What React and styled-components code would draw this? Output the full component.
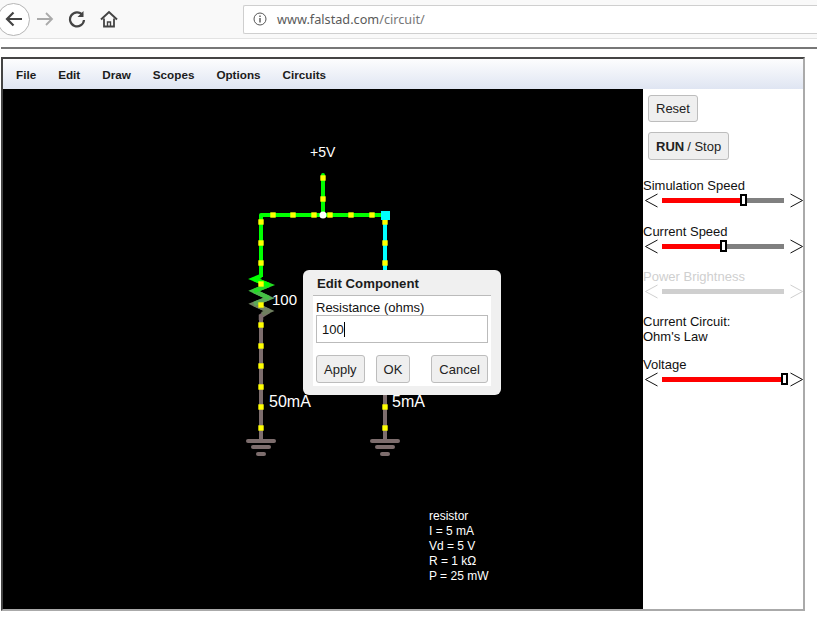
import React from "react";
import styled, { createGlobalStyle } from "styled-components";

const GlobalStyle = createGlobalStyle`
  html, body {
    margin: 0;
    padding: 0;
    background: #fff;
    font-family: "Liberation Sans", Arial, sans-serif;
  }
`;

const Page = styled.div`
  width: 817px;
  height: 629px;
  overflow: hidden;
  background: #fff;
`;

const BrowserBar = styled.div`
  height: 38px;
  display: flex;
  align-items: center;
  background: #f9f9f9;
  border-bottom: 1px solid #e3e3e3;
`;

const BackButton = styled.div`
  width: 31px;
  height: 31px;
  margin-left: -3px;
  border: 1px solid #b5b5b5;
  border-radius: 50%;
  background: #fff;
  display: flex;
  align-items: center;
  justify-content: center;
  flex: none;
`;

const NavIcon = styled.div`
  width: 20px;
  height: 20px;
  margin-left: ${(p) => p.$gap}px;
  display: flex;
  align-items: center;
  justify-content: center;
  flex: none;
`;

const UrlBox = styled.div`
  width: 600px;
  height: 27px;
  margin-left: 124px;
  display: flex;
  align-items: center;
  background: #fff;
  border: 1px solid #cfcfcf;
  border-right: none;
  border-radius: 2px 0 0 2px;
  flex: none;
  font-family: "Noto Sans", sans-serif;
  font-size: 12.7px;
  color: #777;
`;

const InfoIcon = styled.div`
  width: 14px;
  height: 14px;
  margin-left: 9px;
  margin-right: 10px;
  display: flex;
`;

const Host = styled.span`
  color: #5a5a5a;
`;

const Rule = styled.div`
  height: 2px;
  margin: 8px 0 0 1px;
  background: #777;
`;

const AppFrame = styled.div`
  width: 804px;
  height: 554px;
  margin: 8px 0 0 1px;
  box-sizing: border-box;
  border: 2px solid #aaa;
  border-top-color: #444;
  border-left-color: #444;
  display: flex;
  flex-direction: column;
`;

const MenuBar = styled.div`
  height: 30px;
  flex: none;
  display: flex;
  align-items: center;
  padding-left: 13px;
  gap: 22px;
  background: linear-gradient(#fdfdfe, #dfe5f2);
  font-size: 11.7px;
  font-weight: bold;
  color: #1c1c1c;
`;

const Body = styled.div`
  flex: 1;
  display: flex;
  min-height: 0;
`;

const Canvas = styled.div`
  position: relative;
  width: 640px;
  flex: none;
  background: #000;
`;

const Diagram = styled.svg`
  display: block;
  position: absolute;
  left: 0;
  top: 0;
`;

const InfoText = styled.div`
  position: absolute;
  left: 426px;
  top: 420px;
  color: #fff;
  font-size: 12px;
  line-height: 15px;
`;

const Dialog = styled.div`
  position: absolute;
  left: 300px;
  top: 181px;
  width: 198px;
  height: 125px;
  box-sizing: border-box;
  padding: 6px 10px 9px 10px;
  background: #f0f0f0;
  border-radius: 6px;
  display: flex;
  flex-direction: column;
`;

const DialogTitle = styled.div`
  height: 19px;
  flex: none;
  padding-left: 4px;
  font-size: 13.2px;
  font-weight: bold;
  line-height: 15px;
  color: #1c1c1c;
  border-bottom: 1px solid #bbb;
`;

const DialogBody = styled.div`
  flex: 1;
  background: #fff;
  padding: 5px 3px 0 3px;
  font-size: 13px;
  color: #111;
`;

const FieldLabel = styled.div`
  line-height: 14px;
`;

const FieldInput = styled.div`
  height: 28px;
  box-sizing: border-box;
  border: 1px solid #bbb;
  padding-left: 5px;
  display: flex;
  align-items: center;
`;

const Caret = styled.span`
  display: inline-block;
  width: 1px;
  height: 15px;
  background: #000;
`;

const ButtonRow = styled.div`
  display: flex;
  margin-top: 12px;
`;

const Button = styled.div`
  height: ${(p) => p.$h || 28}px;
  box-sizing: border-box;
  padding: 0 7px;
  margin-left: ${(p) => p.$left || 0}px;
  display: inline-flex;
  align-items: center;
  background: #efefef;
  border: 1px solid #bdbdbd;
  border-radius: 3px;
  font-size: 13px;
  color: #222;
`;

const Side = styled.div`
  flex: 1;
  background: #fff;
  padding: 6px 0 0 0;
  font-size: 13px;
  color: #111;
`;

const SideButtons = styled.div`
  padding-left: 5px;
  display: flex;
  flex-direction: column;
  align-items: flex-start;
  gap: 10px;
`;

const Strong = styled.b`
  font-weight: bold;
  margin-right: 3px;
`;

const SliderBlock = styled.div`
  margin-top: ${(p) => p.$top}px;
  color: ${(p) => (p.$off ? "#cfcfcf" : "#111")};
`;

const SliderLabel = styled.div`
  height: 14px;
  line-height: 14px;
`;

const Track = styled.div`
  position: relative;
  width: 122px;
  height: 5px;
  margin: 0 6px 0 4px;
  flex: none;
  background: ${(p) => (p.$off ? "#cfcfcf" : "#808080")};
`;

const Fill = styled.div`
  height: 100%;
  background: #f00;
`;

const Thumb = styled.div`
  position: absolute;
  top: -4px;
  width: 7px;
  height: 12px;
  box-sizing: border-box;
  background: #fff;
  border: 2px solid #000;
`;

const SliderRow = styled.div`
  display: flex;
  align-items: center;
  height: 14px;
  margin-left: 2px;
`;

const ChevronIcon = styled.svg`
  flex: none;
`;

const CircuitName = styled.div`
  margin-top: 16px;
  line-height: 15px;
`;

const Chevron = ({ right, color }) => (
  <ChevronIcon width="13" height="15" viewBox="0 0 13 15">
    <path
      d={right ? "M0.5 1 L12.5 7.5 L0.5 14" : "M12.5 1 L0.5 7.5 L12.5 14"}
      fill="none"
      stroke={color}
      strokeWidth="1"
    />
  </ChevronIcon>
);

const Slider = ({ label, value, top, off }) => {
  const color = off ? "#cfcfcf" : "#111";
  return (
    <SliderBlock $top={top} $off={off}>
      <SliderLabel>{label}</SliderLabel>
      <SliderRow>
        <Chevron color={color} />
        <Track $off={off}>
          {!off && (
            <>
              <Fill style={{ width: value }} />
              <Thumb style={{ left: value - 3 }} />
            </>
          )}
        </Track>
        <Chevron right color={color} />
      </SliderRow>
    </SliderBlock>
  );
};

// diagram coordinates are page pixels, the viewBox moves them onto the black canvas
const OX = 3;
const OY = 89;

const topDots = [273, 293, 314, 330, 351, 372];
const stubDots = [178, 199];
const leftDots = [222, 243, 263, 284, 305, 325, 346, 366, 387, 407, 428];
const rightDots = [222, 243, 263, 407, 428];

const Dot = ({ x, y }) => <rect x={x - 2.7} y={y - 2.7} width="5.4" height="5.4" fill="#ff0" />;

const Ground = ({ x }) => (
  <g stroke="#7d6d6d" strokeWidth="4" strokeLinecap="round">
    <line x1={x - 13} y1="441" x2={x + 13} y2="441" />
    <line x1={x - 8} y1="447" x2={x + 8} y2="447" />
    <line x1={x - 3} y1="454" x2={x + 3} y2="454" />
  </g>
);

const Circuit = () => (
  <Diagram width="640" height="520" viewBox={`${OX} ${OY} 640 520`}>
    <g fill="none" strokeWidth="4">
      <path d="M261 277 V215 H385" stroke="#0f0" strokeLinejoin="round" />
      <path d="M323 215 V175" stroke="#0f0" strokeLinecap="round" />
      <path d="M385 215 V272" stroke="#0ff" />
      <path d="M261 318 V441" stroke="#7d6d6d" />
      <path d="M385 390 V441" stroke="#7d6d6d" />
    </g>
    <g fill="none" strokeWidth="4.5" strokeLinejoin="miter" strokeMiterlimit="12">
      <path d="M269 311 L261 316 V320" stroke="#7d6d6d" />
      <path d="M254 304 L269 311 L262 314" stroke="#6f7f5f" />
      <path d="M269 298 L254 304 L269 311" stroke="#6f7f5f" />
      <path d="M254 291 L269 298 L254 304" stroke="#5ca85a" />
      <path d="M269 285 L254 291 L269 298" stroke="#45c045" />
      <path d="M254 279 L269 285 L254 291" stroke="#22dd22" />
      <path d="M261 276 L254 279 L269 285" stroke="#0f0" />
    </g>
    <Ground x={261} />
    <Ground x={385} />
    {topDots.map((x) => <Dot key={x} x={x} y={215} />)}
    {stubDots.map((y) => <Dot key={y} x={323} y={y} />)}
    {leftDots.map((y) => <Dot key={y} x={261} y={y} />)}
    {rightDots.map((y) => <Dot key={y} x={385} y={y} />)}
    <circle cx="323" cy="215" r="3.5" fill="#fff" />
    <rect x="381" y="211" width="9" height="9" fill="#0ff" />
    <g fill="#fff" fontFamily="Liberation Sans, Arial, sans-serif">
      <text x="310" y="157" fontSize="14">+5V</text>
      <text x="272" y="305" fontSize="15">100</text>
      <text x="269" y="407" fontSize="16">50mA</text>
      <text x="392" y="407" fontSize="16">5mA</text>
    </g>
  </Diagram>
);

export default function App() {
  return (
    <Page>
      <GlobalStyle />
      <BrowserBar>
        <BackButton>
          <svg width="18" height="16" viewBox="0 0 18 16">
            <path d="M17 8 H2 M8.5 1.5 L2 8 L8.5 14.5" fill="none" stroke="#444" strokeWidth="2.2" />
          </svg>
        </BackButton>
        <NavIcon $gap={5}>
          <svg width="18" height="16" viewBox="0 0 18 16">
            <path d="M1 8 H16 M10 2 L16 8 L10 14" fill="none" stroke="#aaa" strokeWidth="1.8" />
          </svg>
        </NavIcon>
        <NavIcon $gap={12}>
          <svg width="18" height="18" viewBox="0 0 18 18">
            <path d="M14.5 5 A7 7 0 1 0 16 10" fill="none" stroke="#444" strokeWidth="2.2" />
            <path d="M15.5 1 V7 H9.5 Z" fill="#444" />
          </svg>
        </NavIcon>
        <NavIcon $gap={12}>
          <svg width="18" height="18" viewBox="0 0 18 18">
            <path d="M1 9.5 L9 2 L17 9.5" fill="none" stroke="#444" strokeWidth="2" />
            <path d="M4 8.5 V16.5 H14 V8.5" fill="none" stroke="#444" strokeWidth="1.8" />
            <path d="M7.5 16.5 V12 H10.5 V16.5" fill="none" stroke="#444" strokeWidth="1.4" />
          </svg>
        </NavIcon>
        <UrlBox>
          <InfoIcon>
            <svg width="14" height="14" viewBox="0 0 14 14">
              <circle cx="7" cy="7" r="6" fill="none" stroke="#555" strokeWidth="1" />
              <path d="M7 6 V10.5 M7 3.5 V5" stroke="#555" strokeWidth="1.4" />
            </svg>
          </InfoIcon>
          <span><Host>www.falstad.com</Host>/circuit/</span>
        </UrlBox>
      </BrowserBar>
      <Rule />
      <AppFrame>
        <MenuBar>
          <span>File</span>
          <span>Edit</span>
          <span>Draw</span>
          <span>Scopes</span>
          <span>Options</span>
          <span>Circuits</span>
        </MenuBar>
        <Body>
          <Canvas>
            <Circuit />
            <InfoText>
              <div>resistor</div>
              <div>I = 5 mA</div>
              <div>Vd = 5 V</div>
              <div>R = 1 kΩ</div>
              <div>P = 25 mW</div>
            </InfoText>
            <Dialog>
              <DialogTitle>Edit Component</DialogTitle>
              <DialogBody>
                <FieldLabel>Resistance (ohms)</FieldLabel>
                <FieldInput>100<Caret /></FieldInput>
                <ButtonRow>
                  <Button>Apply</Button>
                  <Button $left={11}>OK</Button>
                  <Button $left={21}>Cancel</Button>
                </ButtonRow>
              </DialogBody>
            </Dialog>
          </Canvas>
          <Side>
            <SideButtons>
              <Button $h={27}>Reset</Button>
              <Button><Strong>RUN</Strong> / Stop</Button>
            </SideButtons>
            <Slider label="Simulation Speed" value={81} top={19} />
            <Slider label="Current Speed" value={61} top={18} />
            <Slider label="Power Brightness" off top={17} />
            <CircuitName>Current Circuit:<br />Ohm's Law</CircuitName>
            <Slider label="Voltage" value={122} top={14} />
          </Side>
        </Body>
      </AppFrame>
    </Page>
  );
}
